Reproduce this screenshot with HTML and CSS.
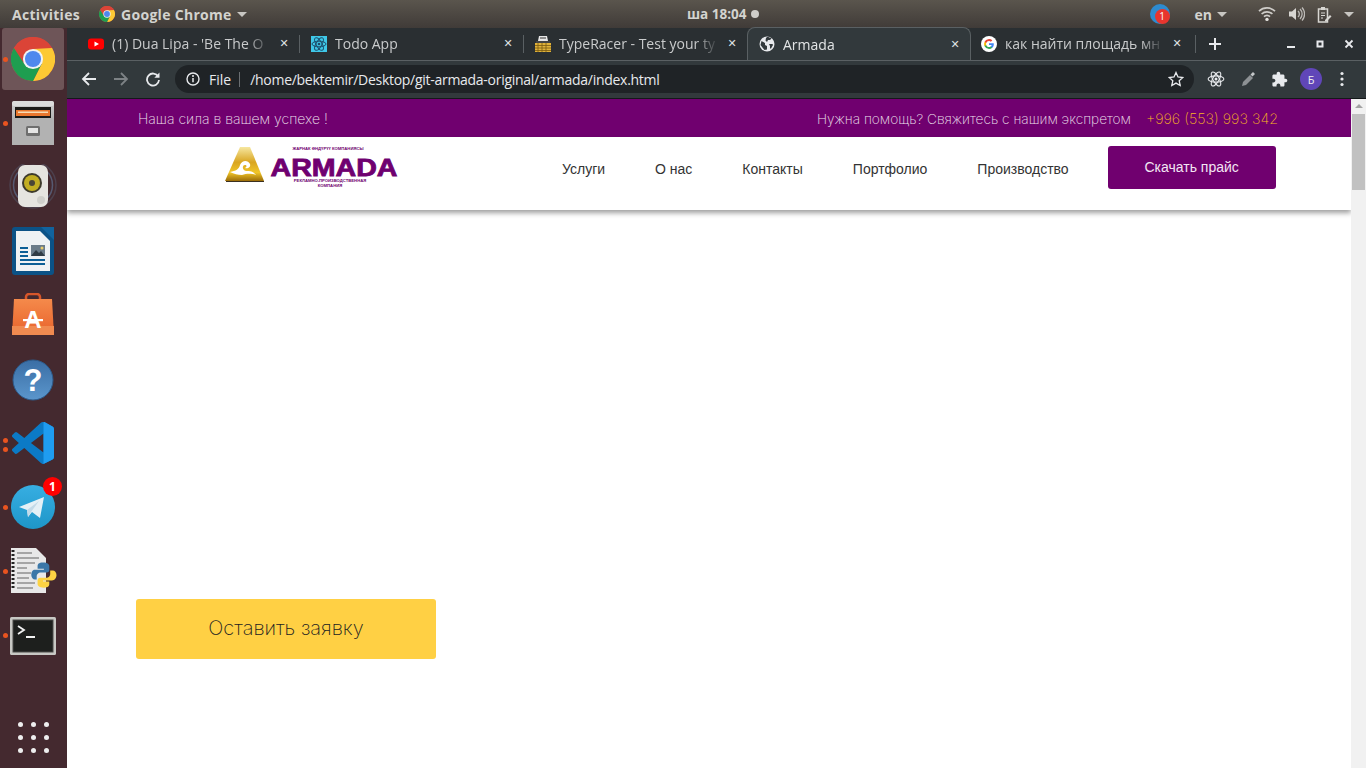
FILE: index.html
```html
<!DOCTYPE html>
<html lang="ru">
<head>
<meta charset="utf-8">
<title>Armada</title>
<link rel="stylesheet" href="styles.css">
</head>
<body>
<svg class="defs" width="0" height="0" aria-hidden="true">
  <defs>
    <linearGradient id="gold" x1="0" y1="0" x2="0" y2="1">
      <stop offset="0" stop-color="#f6e7a0"/><stop offset=".45" stop-color="#d9a520"/><stop offset=".75" stop-color="#f0c528"/><stop offset="1" stop-color="#9b6c08"/>
    </linearGradient>
    <linearGradient id="tg" x1="0" y1="0" x2="0" y2="1">
      <stop offset="0" stop-color="#37aee2"/><stop offset="1" stop-color="#1e96c8"/>
    </linearGradient>
    <linearGradient id="cab" x1="0" y1="0" x2="0" y2="1">
      <stop offset="0" stop-color="#cfcfcf"/><stop offset="1" stop-color="#8d8d8d"/>
    </linearGradient>
    <linearGradient id="bag" x1="0" y1="0" x2="0" y2="1">
      <stop offset="0" stop-color="#f58a4b"/><stop offset="1" stop-color="#e8622b"/>
    </linearGradient>
    <linearGradient id="helpb" x1="0" y1="0" x2="0" y2="1">
      <stop offset="0" stop-color="#3a6ea5"/><stop offset="1" stop-color="#5b96cc"/>
    </linearGradient>
    <symbol id="chrome" viewBox="-24 -24 48 48">
      <circle r="24" fill="#dd4b3e"/>
      <path d="M-20.8-12A24 24 0 0 1 20.8-12L0-10.8 0 0-9.35 5.4Z" fill="#db4437"/>
      <path transform="rotate(120)" d="M-20.8-12A24 24 0 0 1 20.8-12L0-10.8 0 0-9.35 5.4Z" fill="#fcc934"/>
      <path transform="rotate(240)" d="M-20.8-12A24 24 0 0 1 20.8-12L0-10.8 0 0-9.35 5.4Z" fill="#1e9e50"/>
      <circle r="11" fill="#f1f3f4"/>
      <circle r="8.8" fill="#4f88ee"/>
    </symbol>
    <symbol id="atom" viewBox="-12 -12 24 24">
      <g fill="none" stroke="currentColor" stroke-width="1.500">
        <ellipse rx="10.500" ry="4.200"/>
        <ellipse rx="10.500" ry="4.200" transform="rotate(60)"/>
        <ellipse rx="10.500" ry="4.200" transform="rotate(120)"/>
      </g>
      <circle r="2" fill="currentColor"/>
    </symbol>
  </defs>
</svg>

<div class="screen">
  <header class="topbar">
    <span class="activities">Activities</span>
    <span class="appmenu">
      <svg class="appmenu-icon" width="16" height="16"><use href="#chrome"/></svg>
      Google Chrome
      <i class="caret"></i>
    </span>
    <span class="clock">ша 18:04<i class="clock-dot"></i></span>
    <span class="tray">
      <span class="notify"><i class="notify-badge">1</i></span>
      <span class="lang">en<i class="caret"></i></span>
      <svg class="tray-icon" width="18" height="16" viewBox="0 0 18 16"><path d="M1 5.200a11.500 11.500 0 0 1 16 0M3.600 8a7.800 7.800 0 0 1 10.800 0M6 10.600a4.200 4.200 0 0 1 6 0" fill="none" stroke="#cfcdc9" stroke-width="1.700"/><circle cx="9" cy="13.400" r="1.700" fill="#e6e4e0"/></svg>
      <svg class="tray-icon" width="17" height="16" viewBox="0 0 17 16"><path d="M1 5.500h3L8 2v12l-4-3.500H1Z" fill="#d8d6d2"/><path d="M10 5a4 4 0 0 1 0 6M12 3a7 7 0 0 1 0 10M14 1.500a9.500 9.500 0 0 1 0 13" fill="none" stroke="#bdbbb7" stroke-width="1.300"/></svg>
      <svg class="tray-icon" width="15" height="17" viewBox="0 0 15 17"><path d="M1.500 3h9v13h-9Z" fill="none" stroke="#d8d6d2" stroke-width="1.500"/><path d="M4 1h4v3H4Z" fill="#d8d6d2"/><path d="M4 7h4M4 9.500h4M4 12h2" stroke="#d8d6d2" stroke-width="1.200"/><path d="M8 14l5-5 1.500 1.500-5 5H8Z" fill="#d8d6d2"/></svg>
      <i class="caret"></i>
    </span>
  </header>

  <div class="workspace">
    <nav class="dock">
      <a class="dock-item dock-item-active"><i class="run-dot"></i>
        <svg width="44" height="44"><use href="#chrome"/></svg>
      </a>
      <a class="dock-item"><i class="run-dot"></i>
        <svg width="44" height="46" viewBox="0 0 44 46">
          <rect x="1" y="1" width="42" height="44" rx="3" fill="url(#cab)"/>
          <rect x="1" y="1" width="42" height="5" rx="2" fill="#dcdcdc"/>
          <rect x="4" y="7" width="36" height="11" fill="#1c1a18"/>
          <rect x="5" y="10" width="34" height="6" fill="#e8772e"/>
          <rect x="7" y="11.500" width="30" height="1.500" fill="#f6dcb5"/>
          <rect x="1" y="18" width="42" height="27" fill="#b2b2b2"/>
          <rect x="15" y="26" width="14" height="10" rx="1.500" fill="#6f6f6f"/>
          <rect x="17" y="28" width="10" height="5" fill="#e5e5e5"/>
        </svg>
      </a>
      <a class="dock-item">
        <svg width="50" height="46" viewBox="0 0 50 46">
          <circle cx="25" cy="21" r="23" fill="none" stroke="#5d6c86" stroke-width="1.500" opacity=".35"/>
          <circle cx="25" cy="21" r="19.500" fill="none" stroke="#627a9e" stroke-width="1.500" opacity=".6"/>
          <rect x="10" y="1" width="30" height="42" rx="7" fill="#e5e4e0"/>
          <circle cx="24" cy="19" r="10" fill="#3d3a2c"/>
          <circle cx="24" cy="19" r="8" fill="#c2ae22"/>
          <circle cx="24" cy="19" r="3" fill="#4a4636"/>
          <circle cx="33" cy="36" r="4" fill="#cfcfcb"/>
        </svg>
      </a>
      <a class="dock-item">
        <svg width="42" height="48" viewBox="0 0 42 48">
          <path d="M3 0h27l12 12v33a3 3 0 0 1-3 3H3a3 3 0 0 1-3-3V3a3 3 0 0 1 3-3Z" fill="#0b5286"/>
          <path d="M4 4h24l10 10v30H4Z" fill="#eef2f4"/>
          <path d="M29 0l13 13V0Z" fill="#11639e"/>
          <rect x="8" y="20" width="8" height="2" fill="#0b5f96"/>
          <rect x="8" y="24" width="8" height="2" fill="#0b5f96"/>
          <rect x="8" y="28" width="8" height="2" fill="#0b5f96"/>
          <rect x="8" y="32" width="25" height="2" fill="#0b5f96"/>
          <rect x="8" y="36" width="25" height="2" fill="#0b5f96"/>
          <rect x="19" y="18" width="14" height="11" fill="#6a7c89"/>
          <path d="M19 29l5-6 3 3 2-2 4 5Z" fill="#2f3c45"/>
          <circle cx="30" cy="21" r="1.500" fill="#e9cc6a"/>
        </svg>
      </a>
      <a class="dock-item">
        <svg width="42" height="44" viewBox="0 0 42 44">
          <path d="M14 8V4a3 3 0 0 1 3-3h8a3 3 0 0 1 3 3v4" fill="none" stroke="#d8562a" stroke-width="2.500"/>
          <path d="M2 6h38l2 36H0Z" fill="url(#bag)"/>
          <rect x="0" y="33" width="42" height="9" fill="#f08a50"/>
          <text class="store-a" x="21" y="35" text-anchor="middle">A</text>
          <rect x="11" y="26" width="20" height="2.200" fill="#fff"/>
        </svg>
      </a>
      <a class="dock-item dock-item-low">
        <svg width="42" height="42" viewBox="0 0 42 42">
          <circle cx="21" cy="21" r="20" fill="url(#helpb)" stroke="#2d5a8a"/>
          <text class="help-q" x="21" y="32" text-anchor="middle">?</text>
        </svg>
      </a>
      <a class="dock-item dock-item-vscode"><i class="run-dot run-dot-a"></i><i class="run-dot run-dot-b"></i>
        <svg width="42" height="42" viewBox="0 0 100 100">
          <path fill="#0b7ac6" d="M96.460 10.800 75.860.870a6.230 6.230 0 0 0-7.100 1.210L29.350 38.040 12.180 25.010a4.160 4.160 0 0 0-5.320.240L1.360 30.250a4.160 4.160 0 0 0 0 6.160L16.250 50 1.360 63.580a4.160 4.160 0 0 0 0 6.160l5.500 5a4.160 4.160 0 0 0 5.320.240l17.170-13.030 39.410 35.960a6.220 6.220 0 0 0 7.100 1.210l20.600-9.920A6.250 6.250 0 0 0 100 83.580V16.420a6.250 6.250 0 0 0-3.540-5.620ZM75.010 72.700 45.110 50l29.900-22.700v45.400Z"/>
          <path fill="#1f9cf0" d="M75 0h3l18.460 10.800A6.250 6.250 0 0 1 100 16.420v67.160a6.250 6.250 0 0 1-3.540 5.620L75 100Z"/>
        </svg>
      </a>
      <a class="dock-item"><i class="run-dot"></i>
        <svg width="44" height="44" viewBox="0 0 44 44">
          <circle cx="22" cy="22" r="22" fill="url(#tg)"/>
          <path d="M8 22 33 12 29 33 21 27 17 32 16 25Z" fill="#e4f0f6"/>
          <path d="M16 25 28 16 20 27 17 32Z" fill="#c2dae8"/>
        </svg>
        <i class="dock-badge">1</i>
      </a>
      <a class="dock-item"><i class="run-dot"></i>
        <svg width="48" height="48" viewBox="0 0 48 48">
          <path d="M2 1h25l10 10v35H2Z" fill="#e8e8e8"/>
          <path d="M4 3v40" stroke="#222" stroke-width="3" stroke-dasharray="2 2"/>
          <path d="M8 6h15M8 11h22M8 16h18M8 21h10M8 26h14M8 31h12M8 36h18M8 41h16" stroke="#8f8f8f" stroke-width="1.500"/>
          <g transform="translate(7 2) scale(.9)">
            <path d="M30 15c-5 0-6 2-6 4v3h7v1H21c-3 0-4 3-4 6s2 5 4 5h2v-4c0-2 2-4 4-4h7c2 0 3-1 3-3v-4c0-2-2-4-7-4Z" fill="#3b77a8"/>
            <path d="M31 43c5 0 6-2 6-4v-3h-7v-1h10c3 0 5-3 5-6s-2-5-4-5h-3v4c0 2-2 4-4 4h-7c-2 0-3 1-3 3v4c0 2 2 4 7 4Z" fill="#fdd343"/>
          </g>
        </svg>
      </a>
      <a class="dock-item dock-item-low"><i class="run-dot"></i>
        <svg width="46" height="38" viewBox="0 0 46 38">
          <rect x="0" y="0" width="46" height="38" rx="1.500" fill="#c8c8c4"/>
          <rect x="3" y="3" width="40" height="32" fill="#1d1f1d" stroke="#4a4a48"/>
          <path d="M8 9l6 4-6 4" fill="none" stroke="#f2f2f2" stroke-width="1.800"/>
          <path d="M16 20h9" stroke="#f2f2f2" stroke-width="2"/>
        </svg>
      </a>
      <a class="dock-grid">
        <i></i><i></i><i></i><i></i><i></i><i></i><i></i><i></i><i></i>
      </a>
    </nav>

    <div class="browser">
      <div class="tabstrip">
        <div class="tab tab-first">
          <svg class="favicon" width="16" height="16" viewBox="0 0 16 16"><rect y="2.500" width="16" height="11" rx="3" fill="#f00"/><path d="M6.500 5.500 11 8l-4.500 2.500Z" fill="#fff"/></svg>
          <span class="tab-title">(1) Dua Lipa - 'Be The O</span>
          <span class="tab-close">✕</span>
        </div>
        <div class="tab">
          <svg class="favicon" width="16" height="16" viewBox="0 0 16 16"><rect width="16" height="16" fill="#3fc8e8"/><svg class="atom-dark" x="0" y="0" width="16" height="16"><use href="#atom"/></svg></svg>
          <span class="tab-title">Todo App</span>
          <span class="tab-close">✕</span>
        </div>
        <div class="tab tab-before-active">
          <svg class="favicon" width="16" height="16" viewBox="0 0 16 16"><path d="M4 0h8l1 5H3Z" fill="#e6e6e6"/><rect x="5" y="1.500" width="6" height="1" fill="#333"/><rect x="1" y="5" width="14" height="2" fill="#444"/><rect y="7" width="16" height="9" fill="#e0b23a"/><path d="M0 9.500h16M0 12h16M0 14.500h16M3 7v9M7 7v9M11 7v9" stroke="#7a5a12" stroke-width=".8"/></svg>
          <span class="tab-title">TypeRacer - Test your ty</span>
          <span class="tab-close">✕</span>
        </div>
        <div class="tab tab-active">
          <svg class="favicon" width="16" height="16" viewBox="0 0 16 16"><circle cx="8" cy="8" r="7.500" fill="#e8eaed"/><path d="M2.500 5 6 7v2l2 1v3.500L5.500 14 1.500 9ZM8 1c2 0 3 .5 4.500 1.500L11 4H9L8 6 6.500 4.500 7 2ZM10 8h3.500l.5 1-2 3.500H11V10Z" fill="#32393c"/></svg>
          <span class="tab-title">Armada</span>
          <span class="tab-close">✕</span>
        </div>
        <div class="tab tab-last">
          <svg class="favicon" width="16" height="16" viewBox="0 0 16 16"><circle cx="8" cy="8" r="8" fill="#fff"/><path d="M12.800 8.200c0-.4 0-.7-.1-1H8v1.900h2.700a2.300 2.300 0 0 1-1 1.500v1.200h1.600c1-.9 1.500-2.100 1.500-3.600Z" fill="#4285f4"/><path d="M8 13c1.300 0 2.400-.4 3.300-1.200l-1.600-1.200a3 3 0 0 1-4.500-1.600H3.600v1.300A5 5 0 0 0 8 13Z" fill="#34a853"/><path d="M5.200 9a3 3 0 0 1 0-2V5.700H3.600a5 5 0 0 0 0 4.600Z" fill="#fbbc05"/><path d="M8 5c.7 0 1.400.3 1.900.7l1.400-1.400A5 5 0 0 0 3.600 5.700L5.200 7A3 3 0 0 1 8 5Z" fill="#ea4335"/></svg>
          <span class="tab-title">как найти площадь мн</span>
          <span class="tab-close">✕</span>
        </div>
        <span class="tab-new">
          <svg width="14" height="14" viewBox="0 0 14 14"><path d="M7 1v12M1 7h12" stroke="#e8eaed" stroke-width="2"/></svg>
        </span>
        <span class="window-controls">
          <svg width="10" height="10" viewBox="0 0 10 10"><path d="M1 8h8" stroke="#e8eaed" stroke-width="2"/></svg>
          <svg width="10" height="10" viewBox="0 0 10 10"><rect x="2.500" y="2.500" width="5" height="5" fill="none" stroke="#e8eaed" stroke-width="2"/></svg>
          <svg width="10" height="10" viewBox="0 0 10 10"><path d="M1.500 1.500l7 7M8.500 1.500l-7 7" stroke="#e8eaed" stroke-width="1.800"/></svg>
        </span>
      </div>

      <div class="toolbar">
        <svg class="tool tool-back" width="16" height="16" viewBox="0 0 16 16"><path d="M15 8H2M8 2 2 8l6 6" fill="none" stroke="#e8eaed" stroke-width="1.800"/></svg>
        <svg class="tool tool-forward" width="16" height="16" viewBox="0 0 16 16"><path d="M1 8h13M8 2l6 6-6 6" fill="none" stroke="#7d8285" stroke-width="1.800"/></svg>
        <svg class="tool tool-reload" width="16" height="16" viewBox="0 0 16 16"><path d="M13.200 5.500A6 6 0 1 0 14 9" fill="none" stroke="#e8eaed" stroke-width="1.800"/><path d="M14.500 1.500v5.200H9.300Z" fill="#e8eaed"/></svg>
        <div class="omnibox">
          <svg width="14" height="14" viewBox="0 0 14 14"><circle cx="7" cy="7" r="6" fill="none" stroke="#e8eaed" stroke-width="1.400"/><path d="M7 6v4.200" stroke="#e8eaed" stroke-width="1.500"/><circle cx="7" cy="4" r="1" fill="#e8eaed"/></svg>
          <span class="omni-scheme">File</span>
          <i class="omni-sep"></i>
          <span class="omni-url">/home/bektemir/Desktop/git-armada-original/armada/index.html</span>
          <svg class="omni-star" width="16" height="16" viewBox="0 0 16 16"><path d="M8 1.500l2 4.500 4.800.5-3.600 3.200 1 4.800L8 12.100l-4.200 2.400 1-4.800L1.200 6.500 6 6Z" fill="none" stroke="#e8eaed" stroke-width="1.300"/></svg>
        </div>
        <span class="extensions">
          <svg class="ext-atom" width="18" height="18"><use href="#atom"/></svg>
          <svg width="16" height="16" viewBox="0 0 16 16"><path d="M2 15l1-4 7-7 3 3-7 7Z" fill="#8d9194"/><path d="M10.500 3.500 13 1l2 2-2.500 2.500Z" fill="#c4c7c9"/></svg>
          <svg width="17" height="17" viewBox="0 0 24 24"><path d="M20.500 11H19V7c0-1.100-.9-2-2-2h-4V3.500C13 2.120 11.880 1 10.500 1S8 2.120 8 3.500V5H4c-1.100 0-1.990.9-1.990 2v3.800H3.500c1.490 0 2.700 1.210 2.700 2.700s-1.210 2.700-2.700 2.700H2V20c0 1.100.9 2 2 2h3.800v-1.500c0-1.490 1.210-2.700 2.700-2.700 1.490 0 2.700 1.210 2.700 2.700V22H17c1.100 0 2-.9 2-2v-4h1.500c1.380 0 2.500-1.120 2.500-2.500S21.880 11 20.500 11z" fill="#e8eaed"/></svg>
          <span class="avatar">Б</span>
          <svg width="4" height="16" viewBox="0 0 4 16"><circle cx="2" cy="2.500" r="1.600" fill="#e8eaed"/><circle cx="2" cy="8" r="1.600" fill="#e8eaed"/><circle cx="2" cy="13.500" r="1.600" fill="#e8eaed"/></svg>
        </span>
      </div>

      <div class="viewport">
        <main class="page">
          <div class="promo-bar">
            <span class="promo-slogan">Наша сила в вашем успехе !</span>
            <span class="promo-help">Нужна помощь? Свяжитесь с нашим экспретом</span>
            <a class="promo-phone">+996 (553) 993 342</a>
          </div>
          <div class="site-header">
            <a class="logo">
              <svg width="174" height="44" viewBox="0 0 174 44">
                <path d="M15 2h10l14 34H0Z" fill="url(#gold)"/>
                <path d="M1 36.500h38" stroke="#3a3020" stroke-width="1"/>
                <path d="M5 27c6-1 9-3 10-7 2-5 8-5 10-1 1 3-2 5-5 4 2-1 2-3 0-3-3 0-3 5 1 6 4 0 7 0 10 4-6-2-10-1-14 0-4 0-8-1-12-3Z" fill="#fff"/>
                <text class="logo-name" x="45.500" y="31" textLength="127" lengthAdjust="spacingAndGlyphs">ARMADA</text>
                <text class="logo-small" x="103" y="4.500" text-anchor="middle">ЖАРНАК ӨНДҮРҮҮ КОМПАНИЯСЫ</text>
                <text class="logo-small" x="105" y="37" text-anchor="middle">РЕКЛАМНО-ПРОИЗВОДСТВЕННАЯ</text>
                <text class="logo-small" x="105" y="42" text-anchor="middle">КОМПАНИЯ</text>
              </svg>
            </a>
            <nav class="site-nav">
              <a>Услуги</a>
              <a>О нас</a>
              <a>Контакты</a>
              <a>Портфолио</a>
              <a>Производство</a>
            </nav>
            <a class="price-btn">Скачать прайс</a>
          </div>
          <section class="hero">
            <a class="cta">Оставить заявку</a>
          </section>
        </main>
        <div class="scrollbar">
          <i class="scroll-up"></i>
          <i class="scroll-thumb"></i>
        </div>
      </div>
    </div>
  </div>
</div>
</body>
</html>
```
FILE: styles.css
```css
* { box-sizing: border-box; }
html, body { margin: 0; padding: 0; overflow: hidden; }
body { width: 1366px; height: 768px; font-family: "Open Sans", sans-serif; background: #fff; }
.defs { position: absolute; }
i { display: block; font-style: normal; }
a { display: block; }

.screen { width: 1366px; height: 768px; display: flex; flex-direction: column; }

/* GNOME top bar */
.topbar {
  height: 28px; flex: none; display: flex; align-items: center; position: relative;
  background: linear-gradient(#5a554d, #403b38);
  color: #d3d3cf; font-size: 14px; font-weight: 700; font-family: "Open Sans", sans-serif;
}
.activities { margin-left: 12px; letter-spacing: .3px; }
.appmenu { margin-left: 19px; display: flex; align-items: center; gap: 6px; letter-spacing: .3px; }
.appmenu .caret { margin-left: -1px; }
.caret { width: 0; height: 0; border: 5px solid transparent; border-top: 5px solid #c8c6c2; border-bottom: 0; }
.clock { position: absolute; left: 687px; display: flex; align-items: center; gap: 5px; font-size: 13.500px; }
.clock-dot { width: 8px; height: 8px; border-radius: 50%; background: #cfcdc9; }
.tray { margin-left: auto; display: flex; align-items: center; margin-right: 12px; }
.notify { width: 20px; height: 20px; border-radius: 50%; background: #2d8bd0; position: relative; margin-right: 25px; }
.notify-badge {
  position: absolute; right: 0; bottom: 0; width: 15px; height: 15px; border-radius: 50%; background: #e8352e;
  color: #fff; font-size: 10px; font-weight: 400; text-align: center; line-height: 15px;
}
.lang { display: flex; align-items: center; gap: 5px; margin-right: 31px; }
.tray-icon { margin-right: 12px; }

.workspace { flex: 1; display: flex; min-height: 0; }

/* Dock */
.dock { width: 67px; flex: none; background: #44292f; display: flex; flex-direction: column; gap: 2px; position: relative; }
.dock-item { width: 62px; height: 62px; margin-left: 2px; display: flex; align-items: center; justify-content: center; position: relative; border-radius: 3px; }
.dock-item-low { padding-top: 2px; }
.dock-item-active { background: #6e5558; }
.run-dot { position: absolute; left: 1px; top: 29px; width: 5px; height: 5px; border-radius: 50%; background: #e95420; }
.run-dot-a { top: 26px; }
.run-dot-b { top: 35px; }
.dock-badge {
  position: absolute; right: 2px; top: 1px; width: 19px; height: 19px; border-radius: 50%; background: #f00;
  color: #fff; font-size: 12px; font-weight: 700; text-align: center; line-height: 19px;
}
.store-a { font: 700 24px "Liberation Sans", sans-serif; fill: #fff; }
.help-q { font: 700 31px "Liberation Sans", sans-serif; fill: #fff; }
.dock-grid { margin-top: auto; margin-bottom: 15px; margin-left: 18px; display: grid; grid-template-columns: repeat(3, 5px); gap: 8px; }
.dock-grid i { width: 5px; height: 5px; border-radius: 50%; background: #eee; }

/* Browser frame */
.browser { flex: 1; min-width: 0; display: flex; flex-direction: column; }
.tabstrip { height: 33px; flex: none; display: flex; padding-left: 8px; background: #2a2f32; border-bottom: 1px solid #5a6063; }
.tab {
  width: 224px; height: 32px; flex: none; display: flex; align-items: center; padding: 0 8px 1px 12px;
  color: #c9cbcc; font-size: 14px; position: relative;
}
.tab-first { padding-left: 13px; }
.tab::after { content: ""; position: absolute; right: -1px; top: 7px; width: 1px; height: 18px; background: #5a6063; }
.tab-before-active::after, .tab-active::after { display: none; }
.favicon { flex: none; margin-right: 8px; }
.tab-title {
  flex: 1; min-width: 0; white-space: nowrap; overflow: hidden;
  -webkit-mask-image: linear-gradient(90deg, #000 85%, transparent 100%);
  mask-image: linear-gradient(90deg, #000 85%, transparent 100%);
}
.tab-close { flex: none; width: 14px; margin-left: 6px; text-align: center; font-size: 11px; color: #dfe1e2; font-family: "DejaVu Sans", sans-serif; }
.tab-active {
  height: 33px; background: #32393c; color: #e3e5e6; border: 1px solid #5a6063; border-bottom: 0;
  border-radius: 8px 8px 0 0; margin-top: -1px; padding-left: 11px; padding-bottom: 0;
}
.tab-last { padding-left: 10px; padding-right: 11px; }
.tab-new { width: 40px; margin-left: 0; display: flex; align-items: center; justify-content: center; }
.window-controls { margin-left: auto; display: flex; align-items: center; gap: 19px; margin-right: 12px; }

.toolbar { height: 37px; flex: none; display: flex; align-items: center; background: #32393c; padding: 0 0 1px 14px; }
.tool { flex: none; margin-right: 16px; }
.tool-reload { margin-right: 14px; }
.omnibox {
  width: 1019px; height: 28px; flex: none; border-radius: 14px; background: #1f2326;
  display: flex; align-items: center; padding-left: 11px; padding-right: 10px; color: #e8eaed; font-size: 14px;
}
.omni-scheme { margin-left: 9px; }
.omni-sep { width: 1px; height: 15px; background: #6a6e71; margin: 0 9px 0 8px; }
.omni-url { flex: 1; color: #e8eaed; white-space: nowrap; letter-spacing: -.28px; margin-left: 1px; }
.omni-star { flex: none; }
.extensions { display: flex; align-items: center; margin-left: 13px; gap: 15px; }
.ext-atom { color: #e8eaed; }
.atom-dark { color: #1d4e6b; }
.avatar {
  width: 22px; height: 22px; border-radius: 50%; background: #6046b8; color: #eee; font-size: 11px;
  display: flex; align-items: center; justify-content: center; margin: 0 3px 0 -3px;
}

/* Page */
.viewport { flex: 1; min-height: 0; display: flex; border-top: 1px solid #14181a; }
.page { flex: 1; min-width: 0; display: flex; flex-direction: column; background: #fff; overflow: hidden; }
.promo-bar {
  height: 38px; flex: none; display: flex; align-items: center; padding: 1px 73px 0 71px; background: #70006f;
  color: #efe0ee; font-family: Inter, sans-serif; font-weight: 200; font-size: 13.700px;
}
.promo-slogan { font-size: 14px; }
.promo-help { margin-left: auto; }
.promo-phone { margin-left: 15px; color: #f7b423; font-size: 14.300px; }
.site-header {
  height: 73px; flex: none; display: flex; align-items: flex-start; padding: 8px 0 0 158px; background: #fff;
  box-shadow: 0 3px 5px rgba(0,0,0,.38); position: relative;
}
.logo { width: 174px; height: 44px; }
.logo svg { display: block; }
.logo-name { font: 700 24px "Liberation Sans", sans-serif; fill: #6f0070; stroke: #6f0070; stroke-width: .8px; }
.logo-small { font: 700 4.200px "Liberation Sans", sans-serif; fill: #6f0070; }
.site-nav { display: flex; gap: 50px; margin: 16px 0 0 163px; font: 14px "Liberation Sans", sans-serif; color: #333; }
.price-btn {
  width: 168px; height: 43px; margin: 1px 0 0 39px; border-radius: 3px; background: #70006f; color: #f3e6f3;
  font: 14px/43px "Liberation Sans", sans-serif; text-align: center;
}
.hero { flex: 1; display: flex; align-items: flex-end; padding: 0 0 109px 69px; }
.cta {
  width: 300px; height: 60px; border-radius: 3px; background: #ffd044; color: #222;
  font-family: Inter, sans-serif; font-weight: 200; font-size: 20px; line-height: 58px; text-align: center;
}
.scrollbar { width: 15px; flex: none; background: #f1f1f1; display: flex; flex-direction: column; align-items: center; }
.scroll-up { width: 0; height: 0; margin-top: 5px; border: 4px solid transparent; border-bottom: 4px solid #a3a3a3; border-top: 0; }
.scroll-thumb { width: 13px; height: 76px; margin-top: 6px; background: #c1c1c1; }
```
